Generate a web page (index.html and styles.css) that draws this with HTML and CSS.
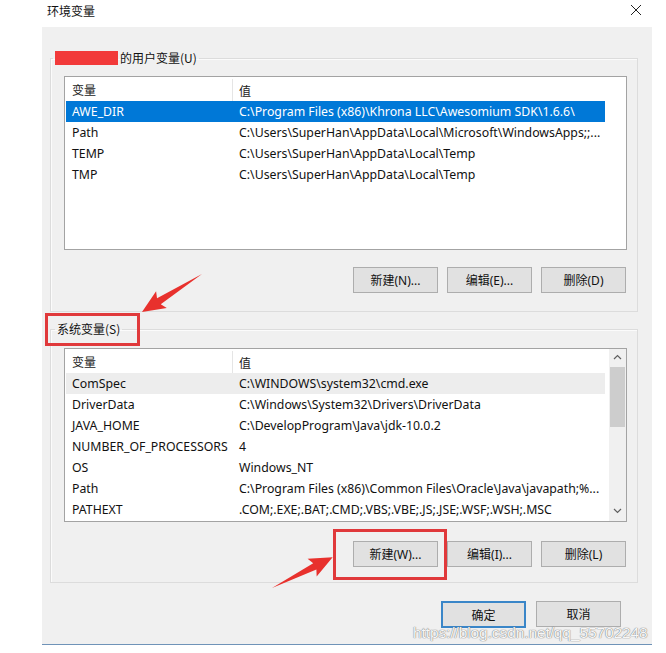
FILE: index.html
```html
<!DOCTYPE html>
<html lang="zh-CN">
<head>
    <meta charset="utf-8">
    <title>环境变量</title>
    <link rel="stylesheet" href="styles.css">
</head>
<body>

    <div class="window">
        <div class="titlebar">
            <span class="title">环境变量</span>
            <svg class="close" width="12" height="12" viewBox="0 0 12 12">
                <path d="M1 1 L11 11 M11 1 L1 11" stroke="#222" stroke-width="1" fill="none"/>
            </svg>
        </div>

        <div class="dialog">
            <fieldset class="group">
                <legend><span class="redact"></span>的用户变量(U)</legend>
                <div class="list">
                    <div class="list-body">
                        <div class="row head"><div class="c1">变量</div><div class="c2">值</div></div>
                        <div class="row selected"><div class="c1">AWE_DIR</div><div class="c2">C:\Program Files (x86)\Khrona LLC\Awesomium SDK\1.6.6\</div></div>
                        <div class="row"><div class="c1">Path</div><div class="c2">C:\Users\SuperHan\AppData\Local\Microsoft\WindowsApps;;...</div></div>
                        <div class="row"><div class="c1">TEMP</div><div class="c2">C:\Users\SuperHan\AppData\Local\Temp</div></div>
                        <div class="row"><div class="c1">TMP</div><div class="c2">C:\Users\SuperHan\AppData\Local\Temp</div></div>
                    </div>
                </div>
                <div class="btn-row">
                    <button class="btn">新建(N)...</button>
                    <button class="btn">编辑(E)...</button>
                    <button class="btn">删除(D)</button>
                </div>
            </fieldset>

            <fieldset class="group sys">
                <legend class="marked legend-mark">系统变量(S)</legend>
                <div class="list">
                    <div class="list-body">
                        <div class="row head"><div class="c1">变量</div><div class="c2">值</div></div>
                        <div class="row hover"><div class="c1">ComSpec</div><div class="c2">C:\WINDOWS\system32\cmd.exe</div></div>
                        <div class="row"><div class="c1">DriverData</div><div class="c2">C:\Windows\System32\Drivers\DriverData</div></div>
                        <div class="row"><div class="c1">JAVA_HOME</div><div class="c2">C:\DevelopProgram\Java\jdk-10.0.2</div></div>
                        <div class="row"><div class="c1">NUMBER_OF_PROCESSORS</div><div class="c2">4</div></div>
                        <div class="row"><div class="c1">OS</div><div class="c2">Windows_NT</div></div>
                        <div class="row"><div class="c1">Path</div><div class="c2">C:\Program Files (x86)\Common Files\Oracle\Java\javapath;%...</div></div>
                        <div class="row"><div class="c1">PATHEXT</div><div class="c2">.COM;.EXE;.BAT;.CMD;.VBS;.VBE;.JS;.JSE;.WSF;.WSH;.MSC</div></div>
                    </div>
                    <div class="scrollbar">
                        <svg class="sb-arrow" width="17" height="17" viewBox="0 0 17 17">
                            <path d="M5 10 L8.5 6.5 L12 10" stroke="#606060" stroke-width="1.2" fill="none"/>
                        </svg>
                        <div class="thumb"></div>
                        <svg class="sb-arrow down" width="17" height="17" viewBox="0 0 17 17">
                            <path d="M5 7 L8.5 10.5 L12 7" stroke="#606060" stroke-width="1.2" fill="none"/>
                        </svg>
                    </div>
                </div>
                <div class="btn-row">
                    <span class="marked btn-mark"><button class="btn">新建(W)...</button></span>
                    <button class="btn">编辑(I)...</button>
                    <button class="btn">删除(L)</button>
                </div>
            </fieldset>

            <div class="actions">
                <button class="btn default">确定</button>
                <button class="btn">取消</button>
            </div>
        </div>
    </div>

    <svg class="arrows" width="666" height="653" viewBox="0 0 666 653">
        <polygon transform="translate(202 274) rotate(147.7)" points="0,0 51,-3.5 48,-10 71,0 48,10 51,3.5" fill="#e8312d"/>
        <polygon transform="translate(272 588) rotate(-26.9)" points="0,0 48,-3.5 45,-10 68,0 45,10 48,3.5" fill="#e8312d"/>
    </svg>

    <div class="watermark">https://blog.csdn.net/qq_55702248</div>

</body>
</html>
```

FILE: styles.css
```css
body {
    margin: 0;
    background-color: white;
    font-family: "Noto Sans", "Noto Sans CJK SC", sans-serif;
    font-size: 12.3px;
    color: #111;
}
.window {
    width: 666px;
    height: 653px;
}
.titlebar {
    display: flex;
    justify-content: space-between;
    align-items: center;
    height: 20px;
    padding: 0 24px 0 47px;
    margin-bottom: 7px;
}
.title {
    font-family: "Noto Sans CJK SC", sans-serif;
    font-size: 12px;
}
.dialog {
    margin-left: 42px;
    width: 610px;
    height: 618px;
    box-sizing: border-box;
    background-color: #f0f0f0;
    padding-top: 24px;
    border-bottom: 1px solid #6f93b8;
}
.group {
    margin: 0 14px 0 8px;
    padding: 11px 10px 18px 13px;
    border: 1px solid #dcdcdc;
    box-shadow: inset 1px 1px 0 #fbfbfb;
}
.group legend {
    font-family: "Noto Sans CJK SC", sans-serif;
    font-size: 12px;
    line-height: 14px;
    padding: 0 2px;
    margin-left: -11px;
    display: flex;
    align-items: center;
}
.group.sys {
    margin-top: 10px;
    padding-top: 12px;
    padding-bottom: 15px;
}
.group.sys legend {
    margin-left: -9px;
}
.redact {
    display: inline-block;
    width: 63px;
    height: 14px;
    background-color: #f23a3a;
    margin-right: 2px;
}
.list {
    display: flex;
    height: 174px;
    box-sizing: border-box;
    background-color: white;
    border: 1px solid #a3a3a3;
}
.list-body {
    flex: 1;
    padding: 2px 0 0 1px;
    overflow: hidden;
}
.row {
    display: flex;
    align-items: center;
    height: 21px;
    white-space: nowrap;
}
.row .c1 {
    width: 167px;
    box-sizing: border-box;
    padding-left: 6px;
}
.row .c2 {
    width: 372px;
    box-sizing: border-box;
    padding-left: 6px;
    overflow: hidden;
}
.row.head {
    height: 22px;
    font-family: "Noto Sans CJK SC", sans-serif;
    font-size: 12px;
    color: #222;
}
.row.head .c1 {
    border-right: 1px solid #e5e5e5;
    line-height: 22px;
}
.row.selected {
    width: 539px;
    background-color: #0078d7;
    color: white;
}
.row.hover {
    width: 539px;
    background-color: #ededed;
}
.scrollbar {
    width: 17px;
    display: flex;
    flex-direction: column;
    background-color: #f0f0f0;
}
.sb-arrow {
    display: block;
}
.sb-arrow.down {
    margin-top: auto;
    margin-bottom: 2px;
}
.thumb {
    margin: 1px 1px 0 1px;
    height: 60px;
    background-color: #cdcdcd;
}
.btn-row {
    display: flex;
    justify-content: flex-end;
    gap: 9px;
    margin-top: 17px;
    padding-right: 1px;
}
.sys .btn-row {
    margin-top: 19px;
}
.btn {
    width: 85px;
    height: 26px;
    box-sizing: border-box;
    background-color: #e1e1e1;
    border: 1px solid #adadad;
    font-family: "Noto Sans", "Noto Sans CJK SC", sans-serif;
    font-size: 12px;
    color: #111;
    padding: 0;
}
.btn.default {
    height: 27px;
    border: 2px solid #3a86c8;
}
.actions {
    display: flex;
    justify-content: flex-end;
    gap: 10px;
    margin-top: 18px;
    padding-right: 31px;
}
.marked {
    position: relative;
}
.marked::after {
    content: "";
    position: absolute;
    border: 3px solid #e0393b;
}
.legend-mark::after {
    left: -10px;
    right: -18px;
    top: -9px;
    bottom: -10px;
}
.btn-mark {
    display: block;
}
.btn-mark::after {
    left: -20px;
    right: -9px;
    top: -12px;
    bottom: -13px;
}
.arrows {
    position: absolute;
    top: 0;
    left: 0;
    pointer-events: none;
}
.watermark {
    position: absolute;
    left: 413px;
    top: 624px;
    font-family: "Liberation Sans", sans-serif;
    font-size: 15.5px;
    color: rgba(255, 255, 255, 0.95);
    text-shadow: 0 0 1px #7a7a7a, 0 0 1px #7a7a7a;
    letter-spacing: -0.1px;
}
```
